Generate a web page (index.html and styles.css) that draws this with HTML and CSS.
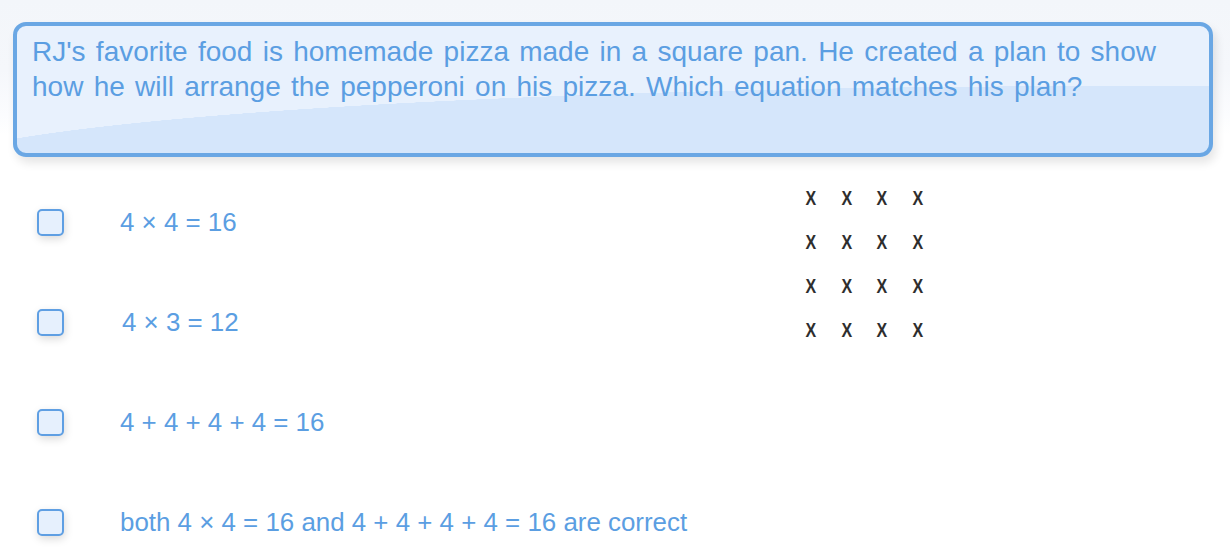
FILE: index.html
```html
<!DOCTYPE html>
<html lang="en">
<head>
<meta charset="utf-8">
<title>Pizza plan question</title>
<link rel="stylesheet" href="styles.css">
</head>
<body>
<div class="page">
  <div class="question">
    <p class="question-text">RJ's favorite food is homemade pizza made in a square pan. He created a plan to show how he will arrange the pepperoni on his pizza. Which equation matches his plan?</p>
  </div>
  <div class="content">
    <div class="options">
      <div class="option"><span class="box"></span><span class="label">4 × 4 = 16</span></div>
      <div class="option"><span class="box"></span><span class="label shift">4 × 3 = 12</span></div>
      <div class="option"><span class="box"></span><span class="label">4 + 4 + 4 + 4 = 16</span></div>
      <div class="option"><span class="box"></span><span class="label">both 4 × 4 = 16 and 4 + 4 + 4 + 4 = 16 are correct</span></div>
    </div>
    <div class="plan">
      <span>X</span><span>X</span><span>X</span><span>X</span>
      <span>X</span><span>X</span><span>X</span><span>X</span>
      <span>X</span><span>X</span><span>X</span><span>X</span>
      <span>X</span><span>X</span><span>X</span><span>X</span>
    </div>
  </div>
</div>
</body>
</html>
```
FILE: styles.css
```css
html, body {
  margin: 0;
  padding: 0;
}
body {
  width: 1230px;
  height: 552px;
  overflow: hidden;
  font-family: "Liberation Sans", Arial, sans-serif;
  background: linear-gradient(to bottom, #f3f6fa 0px, #f5f7fb 70px, #fbfcfe 115px, #ffffff 135px);
}
.page {
  padding-top: 22px;
}
.question {
  margin-left: 13px;
  width: 1200px;
  height: 135px;
  box-sizing: border-box;
  border: 4px solid #6aa7e4;
  border-radius: 13px;
  padding: 8px 30px 0 15px;
  background: radial-gradient(ellipse 1200px 87px at 1100px 147px, #d5e6fb calc(100% - 1.5px), #e8f1fd 100%);
  box-shadow: 3px 6px 10px rgba(0, 0, 0, 0.10);
}
.question-text {
  margin: 0;
  font-size: 28px;
  line-height: 35px;
  word-spacing: 2.5px;
  color: #5b9ee2;
}
.content {
  display: flex;
  margin-top: 15px;
}
.options {
  width: 793px;
  box-sizing: border-box;
  padding-left: 37px;
  display: flex;
  flex-direction: column;
}
.option {
  height: 100px;
  display: flex;
  align-items: center;
  gap: 56px;
}
.box {
  width: 27px;
  height: 27px;
  box-sizing: border-box;
  border: 2.5px solid #5f9fe3;
  border-radius: 5px;
  background: #e6f0fd;
  box-shadow: 1px 3px 9px rgba(0, 0, 0, 0.15);
  flex: none;
}
.label {
  font-size: 25.9px;
  color: #5b9ee2;
  line-height: 30px;
}
.label.shift {
  padding-left: 2px;
}
.plan {
  margin-top: 4px;
  display: grid;
  grid-template-columns: repeat(4, 35.5px);
  grid-auto-rows: 44px;
  align-self: flex-start;
}
.plan span {
  display: flex;
  align-items: center;
  justify-content: center;
  font-size: 20px;
  font-weight: bold;
  color: #2e2e2e;
  transform: scaleX(0.8);
}
```
